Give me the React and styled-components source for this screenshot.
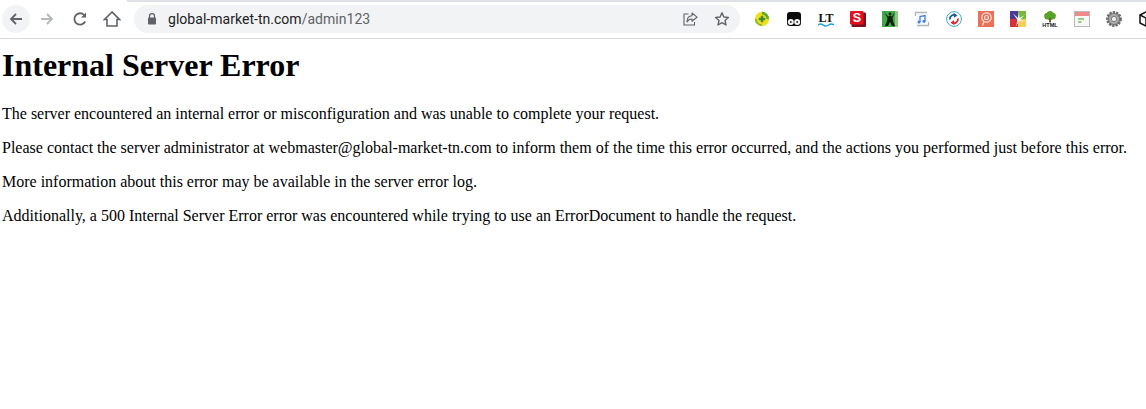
import React from 'react';
import styled, { createGlobalStyle } from 'styled-components';

const Global = createGlobalStyle`
  html, body { margin: 0; padding: 0; background: #fff; }
  body { font-family: "Liberation Serif", "Times New Roman", serif; color: #000; overflow: hidden; }
`;

const Toolbar = styled.div`
  position: relative;
  height: 39px;
  box-sizing: border-box;
  border-bottom: 1px solid #d9dadc;
  display: flex;
  align-items: center;
  padding: 5px 0 6px 2px;
  background: #fff;
  overflow: hidden;
`;

const TabEdge = styled.div`
  position: absolute;
  top: 0;
  left: 127px;
  right: 0;
  height: 2px;
  background: #dee1e6;
`;

const NavButton = styled.div`
  width: 28px;
  height: 28px;
  flex: none;
  border-radius: 50%;
  margin-right: ${p => p.$gap}px;
  background: ${p => (p.$hover ? '#f1f3f4' : 'transparent')};
  display: flex;
  align-items: center;
  justify-content: center;
`;

const Omnibox = styled.div`
  flex: none;
  width: 606px;
  height: 28px;
  margin-left: 8px;
  border-radius: 14px;
  background: #f1f3f4;
  display: flex;
  align-items: center;
  padding: 0 10px 0 12px;
  box-sizing: border-box;
`;

const Url = styled.div`
  flex: 1;
  margin-left: 10px;
  font-family: Roboto, "Liberation Sans", sans-serif;
  font-size: 14px;
  letter-spacing: 0.03px;
  color: #202124;
  white-space: nowrap;
`;

const UrlPath = styled.span`
  color: #5f6368;
`;

const OmniIcon = styled.div`
  width: 16px;
  height: 16px;
  margin-left: 16px;
  display: flex;
`;

const Extensions = styled.div`
  display: flex;
  align-items: center;
  margin-left: 14px;
`;

const Ext = styled.div`
  width: 16px;
  height: 16px;
  flex: none;
  margin-right: 16px;
  display: flex;
`;

const Page = styled.main`
  padding: 0 2px;
`;

const Title = styled.h1`
  font-size: 32px;
  font-weight: 700;
  line-height: 37px;
  margin: 8px 0 21px;
`;

const Para = styled.p`
  font-size: 16px;
  line-height: 18px;
  margin: 0 0 16px;
  white-space: nowrap;
`;

const Glyph = ({ children }) => (
  <svg width="16" height="16" viewBox="0 0 16 16">{children}</svg>
);

const extIcons = [
  <Glyph key="a">
    <circle cx="8" cy="8" r="7.200" fill="#efe01c" />
    <path d="M8 .8A7.200 7.200 0 0 1 15.200 8H12.500A4.500 4.500 0 0 0 8 3.500z" fill="#5cab35" />
    <path d="M.8 8A7.200 7.200 0 0 0 8 15.200V13.200A5.200 5.200 0 0 1 2.800 8z" fill="#8fb92c" />
    <path d="M6.800 4.800h2.400v2h2v2.400h-2v2H6.800v-2h-2V6.800h2z" fill="#3f8e2d" />
  </Glyph>,
  <Glyph key="b">
    <path d="M4 1h8a3 3 0 0 1 3 3v8a3 3 0 0 1-3 3H4a3 3 0 0 1-3-3V4a3 3 0 0 1 3-3z" fill="#0a0a0a" />
    <circle cx="4.800" cy="11" r="3" fill="#f4f4f4" />
    <circle cx="11.200" cy="11" r="3" fill="#f4f4f4" />
    <circle cx="4.800" cy="11" r="1" fill="#333" />
    <circle cx="11.200" cy="11" r="1" fill="#333" />
  </Glyph>,
  <Glyph key="c">
    <text x="8" y="10.500" textAnchor="middle" fontFamily="Liberation Serif, serif" fontWeight="700" fontSize="12" fill="#111">LT</text>
    <path d="M0 14q2.600-2 5.200 0t5.400 0 5.400 0" stroke="#1aa0dc" strokeWidth="1.500" fill="none" />
  </Glyph>,
  <Glyph key="d">
    <rect x="1.500" y="1.500" width="14.500" height="14.500" rx="1" fill="#7d1019" />
    <rect x="0" y="0" width="13.500" height="13.500" rx="1" fill="#e2101f" />
    <text x="6.800" y="11.300" textAnchor="middle" fontFamily="Liberation Sans, sans-serif" fontWeight="700" fontSize="12.500" fill="#fff">S</text>
  </Glyph>,
  <Glyph key="e">
    <rect x="0" y="0" width="16" height="16" fill="#43a84a" />
    <rect x="13" y="0" width="3" height="16" fill="#93c784" />
    <path d="M2 1l4.200 4.500L8 4.500l1.800 1L13 1l-2.500 6 .5 3 2 5H10L8 11l-2 4H3l2-5 .5-3z" fill="#10210f" />
    <circle cx="8" cy="3" r="1.400" fill="#10210f" />
  </Glyph>,
  <Glyph key="f">
    <path d="M1.500 5V1.500H13M14.500 11v3.500H3" stroke="#b0b5bc" strokeWidth="1.400" fill="none" />
    <rect x="2" y="3" width="12" height="10" fill="#f5f7fb" />
    <path d="M6 11V5.500l5-1V10" stroke="#3f7fe0" strokeWidth="1.300" fill="none" />
    <circle cx="5" cy="11" r="1.500" fill="#3f7fe0" />
    <circle cx="10" cy="10.200" r="1.500" fill="#3f7fe0" />
  </Glyph>,
  <Glyph key="g">
    <circle cx="8" cy="8" r="7.400" fill="#fff" stroke="#3aa7cf" strokeWidth="1" />
    <path d="M4 8.500a4 4 0 0 1 6-4" stroke="#1f5f96" strokeWidth="1.800" fill="none" />
    <path d="M12 7.500a4 4 0 0 1-6 4" stroke="#e2242c" strokeWidth="1.800" fill="none" />
    <path d="M7.500 1.800l4 2.800-3.500 2.200z" fill="#1f5f96" />
    <path d="M8.500 14.200l-4-2.800 3.500-2.200z" fill="#e2242c" />
  </Glyph>,
  <Glyph key="h">
    <rect width="16" height="16" fill="#ec7057" />
    <circle cx="8.500" cy="6.500" r="4.700" fill="none" stroke="#fbe3dc" strokeWidth="1.200" />
    <circle cx="8.500" cy="6.500" r="2" fill="none" stroke="#fbe3dc" strokeWidth="1.100" />
    <path d="M6 10.500l-1.500 4" stroke="#fbe3dc" strokeWidth="1.300" />
  </Glyph>,
  <Glyph key="i">
    <rect width="8" height="8" fill="#4b3a97" />
    <rect x="8" width="8" height="8" fill="#79b83f" />
    <rect y="8" width="8" height="8" fill="#d5313c" />
    <rect x="8" y="8" width="8" height="8" rx="1" fill="#f4cf5a" />
    <path d="M6 15.500L7.500 9 3 2.500 8 7l1-5.500.5 5.500L14 4.500 10 9l5 1.500-6-.500z" fill="#fff" />
  </Glyph>,
  <Glyph key="j">
    <path d="M8 0c2 0 3 1 3.400 2 2 0 3 2 2.300 3.500C14 7.500 12 9 10 8.500 8.800 9.200 7 9.200 6 8.500 4 9 2 7.500 2.300 5.500 1.600 4 3 2 4.600 2 5 1 6 0 8 0z" fill="#57a325" />
    <rect x="7.100" y="7" width="1.800" height="4.500" fill="#7a4b22" />
    <text x="8" y="15.500" textAnchor="middle" fontFamily="Liberation Sans, sans-serif" fontWeight="700" fontSize="5.500" fill="#111">HTML</text>
  </Glyph>,
  <Glyph key="k">
    <rect x=".5" y=".5" width="15" height="15" fill="#f8f8f8" stroke="#b9b9b9" />
    <rect x="1" y="1" width="14" height="4" fill="#f08a8a" />
    <path d="M4 8h6M4 11h3.500" stroke="#7bbf6a" strokeWidth="1.300" />
  </Glyph>,
  <Glyph key="l">
    <circle cx="8" cy="8" r="6.600" fill="#8c8c8c" stroke="#6a6a6a" strokeWidth="2.600" strokeDasharray="2.200 1.100" />
    <circle cx="8" cy="8" r="5" fill="#a9a9a9" />
    <circle cx="8" cy="8" r="2.600" fill="#eee" stroke="#666" strokeWidth="0.800" />
  </Glyph>,
  <Glyph key="m">
    <path d="M8 1l6 3v8l-6 3-6-3V4z" fill="#fff" stroke="#111" strokeWidth="1.500" strokeLinejoin="round" />
    <path d="M2 4l6 3 6-3M8 7v8" stroke="#111" strokeWidth="1.500" fill="none" />
  </Glyph>,
];

export default function App() {
  return (
    <>
      <Global />
      <Toolbar>
        <TabEdge />
        <NavButton $hover $gap={3}>
          <svg width="16" height="16" viewBox="0 0 16 16"><path d="M14 8H3M8 3L3 8l5 5" stroke="#5f6368" strokeWidth="1.800" fill="none" /></svg>
        </NavButton>
        <NavButton $gap={5}>
          <svg width="16" height="16" viewBox="0 0 16 16"><path d="M2 8h11M8 3l5 5-5 5" stroke="#b4b7bb" strokeWidth="1.800" fill="none" /></svg>
        </NavButton>
        <NavButton $gap={4}>
          <svg width="16" height="16" viewBox="0 0 16 16"><path d="M13.200 10.500A5.700 5.700 0 1 1 12.200 4" stroke="#5f6368" strokeWidth="1.800" fill="none" /><path d="M14 1.500V6.500H9z" fill="#5f6368" /></svg>
        </NavButton>
        <NavButton $gap={0}>
          <svg width="18" height="18" viewBox="0 0 18 18"><path d="M9 2L1.500 9.500H4V16h10V9.500h2.500z" stroke="#5f6368" strokeWidth="1.600" fill="none" /></svg>
        </NavButton>
        <Omnibox>
          <svg width="12" height="14" viewBox="0 0 12 14"><path d="M3.500 6V4.200a2.500 2.500 0 0 1 5 0V6" stroke="#5f6368" strokeWidth="1.300" fill="none" /><rect x="2" y="5.500" width="8" height="7" rx="1" fill="#5f6368" /></svg>
          <Url>global-market-tn.com<UrlPath>/admin123</UrlPath></Url>
          <OmniIcon>
            <svg width="16" height="16" viewBox="0 0 16 16"><path d="M6.500 3H2v11h10.500v-3" stroke="#5f6368" strokeWidth="1.100" fill="none" /><path d="M10 2l5 4.200-5 4V8C7.500 8 6 9 5 11c0-3.500 2-6 5-6.200z" stroke="#5f6368" strokeWidth="1.100" fill="none" strokeLinejoin="round" /></svg>
          </OmniIcon>
          <OmniIcon>
            <svg width="16" height="16" viewBox="0 0 16 16"><path d="M8 1.800l1.900 4.200 4.500.5-3.400 3 1 4.500L8 11.700 4 14l1-4.500-3.400-3 4.500-.5z" stroke="#5f6368" strokeWidth="1.400" fill="none" strokeLinejoin="round" /></svg>
          </OmniIcon>
        </Omnibox>
        <Extensions>
          {extIcons.map(icon => <Ext key={icon.key}>{icon}</Ext>)}
        </Extensions>
      </Toolbar>
      <Page>
        <Title>Internal Server Error</Title>
        <Para>The server encountered an internal error or misconfiguration and was unable to complete your request.</Para>
        <Para>Please contact the server administrator at webmaster@global-market-tn.com to inform them of the time this error occurred, and the actions you performed just before this error.</Para>
        <Para>More information about this error may be available in the server error log.</Para>
        <Para>Additionally, a 500 Internal Server Error error was encountered while trying to use an ErrorDocument to handle the request.</Para>
      </Page>
    </>
  );
}
